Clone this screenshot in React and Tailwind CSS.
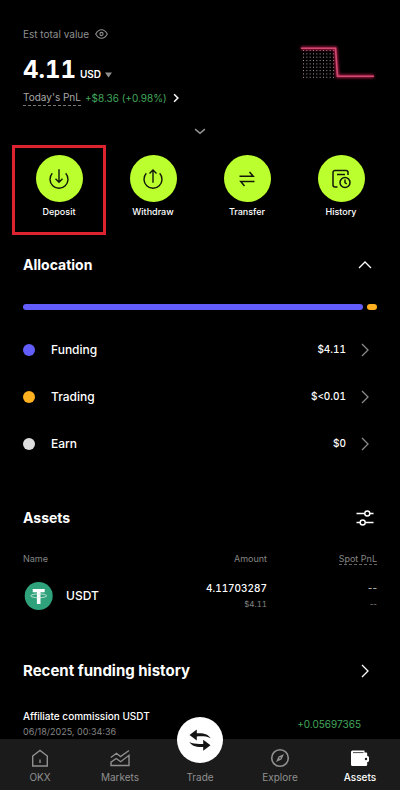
import React from 'react';

function Chevron({ className, d, size = 16, width = 1.3 }) {
  return (
    <svg
      className={className}
      width={size}
      height={size}
      viewBox="0 0 16 16"
      fill="none"
      stroke="currentColor"
      strokeWidth={width}
      aria-hidden="true"
    >
      <path d={d} />
    </svg>
  );
}

const RIGHT = 'M5 2l6 6-6 6';
const UP = 'M2 11l6-6 6 6';

function PnlChart() {
  const dots = [];
  for (let row = 0; row < 9; row += 1) {
    for (let col = 0; col < 10; col += 1) {
      dots.push(
        <rect key={`${row}-${col}`} x={6 + col * 3.33} y={10 + row * 3.35} width="1" height="1" />
      );
    }
  }
  return (
    <svg className="mt-4 shrink-0" width="80" height="44" viewBox="0 0 80 44" fill="none" aria-hidden="true">
      <defs>
        <filter id="glow" x="-20%" y="-30%" width="140%" height="160%">
          <feGaussianBlur stdDeviation="1.5" />
        </filter>
      </defs>
      <g fill="#b09a9c">{dots}</g>
      <path d="M4 8.2h34.500l2 28h36.500" stroke="#c21f50" strokeWidth="3" filter="url(#glow)" />
      <path d="M4 8.2h34.500l2 28h36.500" stroke="#d24a70" strokeWidth="1.6" />
    </svg>
  );
}

function DepositIcon() {
  return (
    <svg width="24" height="24" viewBox="0 0 24 24" fill="none" stroke="#10180a" strokeWidth="1.4" aria-hidden="true">
      <path d="M5.300 6.300a9 9 0 1 0 13.400 0M12 2.200v13M8.500 11.800l3.500 3.400 3.500-3.400" />
    </svg>
  );
}

function WithdrawIcon() {
  return (
    <svg width="24" height="24" viewBox="0 0 24 24" fill="none" stroke="#10180a" strokeWidth="1.4" aria-hidden="true">
      <path d="M5.300 6.300a9 9 0 1 0 13.400 0M12 15.800V3M8.500 6.400L12 3l3.500 3.400" />
    </svg>
  );
}

function TransferIcon() {
  return (
    <svg width="24" height="24" viewBox="0 0 24 24" fill="none" stroke="#10180a" strokeWidth="1.5" aria-hidden="true">
      <path d="M4.500 9.300h13.700L14.500 5M19.500 14.600H5.800l3.700 4.300" />
    </svg>
  );
}

function HistoryIcon() {
  return (
    <svg width="24" height="24" viewBox="0 0 24 24" fill="none" stroke="#10180a" strokeWidth="1.5" aria-hidden="true">
      <path d="M8.500 20H6a2 2 0 0 1-2-2V5.500a2 2 0 0 1 2-2h11a2 2 0 0 1 2 2V8M8 7.500h8" />
      <circle cx="16" cy="15.500" r="5" />
      <path d="M16 12.500v3.200l1.700 1.300" />
    </svg>
  );
}

const actions = [
  { label: 'Deposit', Icon: DepositIcon, marked: true },
  { label: 'Withdraw', Icon: WithdrawIcon },
  { label: 'Transfer', Icon: TransferIcon },
  { label: 'History', Icon: HistoryIcon },
];

const accounts = [
  { name: 'Funding', value: '$4.11', dot: 'bg-[#625dfb]' },
  { name: 'Trading', value: '$<0.01', dot: 'bg-[#ffb11f]' },
  { name: 'Earn', value: '$0', dot: 'bg-[#dedede]' },
];

function NavIcon({ name }) {
  if (name === 'OKX') {
    return (
      <svg width="20" height="20" viewBox="0 0 20 20" fill="none" stroke="currentColor" strokeWidth="1.4" aria-hidden="true">
        <path d="M2.700 8L10 2.500 17.300 8v10H2.700zM10 11.500v3.500" />
      </svg>
    );
  }
  if (name === 'Markets') {
    return (
      <svg width="20" height="20" viewBox="0 0 20 20" fill="none" stroke="currentColor" strokeWidth="1.4" aria-hidden="true">
        <path d="M.8 9.500l5.700-4.200 4 3.200L19 2.500M1 17.500v-3.300l5.200-3.700 4.500 3.200L19 7.300v10.200z" />
      </svg>
    );
  }
  if (name === 'Explore') {
    return (
      <svg width="20" height="20" viewBox="0 0 20 20" fill="none" stroke="currentColor" strokeWidth="1.6" aria-hidden="true">
        <circle cx="10" cy="10" r="8.300" />
        <path d="M14 6l-2.500 5.500L6 14l2.500-5.500z" fill="currentColor" stroke="none" />
        <circle cx="10" cy="10" r=".8" fill="#1b1b1b" stroke="none" />
      </svg>
    );
  }
  return (
    <svg width="20" height="20" viewBox="0 0 20 20" aria-hidden="true">
      <path d="M2.500 2.500h12v2h1.700q1 0 1 1V8h.3q1.500 0 1.500 1.500v3q0 1.500-1.500 1.500h-.3v2.500q0 1.500-1.500 1.500H2.500q-1.500 0-1.500-1.500V4q0-1.500 1.500-1.500z" fill="currentColor" />
      <path d="M3 4.600h10.500" stroke="#1b1b1b" strokeWidth=".8" />
      <circle cx="16" cy="11" r="1.200" fill="#1b1b1b" />
    </svg>
  );
}

function NavItem({ name, active }) {
  return (
    <a
      href={`#${name.toLowerCase()}`}
      className={`flex flex-1 flex-col items-center pt-[9px] ${active ? 'font-medium text-white' : 'text-[#909090]'}`}
    >
      <NavIcon name={name} />
      <span className="mt-0.5 text-[10px] leading-[14px]">{name}</span>
    </a>
  );
}

export default function App() {
  return (
    <div className="flex min-h-screen flex-col bg-black font-['Inter','Liberation_Sans',sans-serif] text-white">
      <main className="flex-1">
        <header className="flex justify-between px-[23px] pt-6">
          <div>
            <div className="flex h-5 items-center gap-1.5 text-[10px] text-[#8f8f8f]">
              <span>Est total value</span>
              <button type="button" aria-label="Hide balance">
                <svg width="13" height="12" viewBox="0 0 13 12" fill="none" stroke="currentColor" strokeWidth="1.1" aria-hidden="true">
                  <path d="M.7 6Q3 1.700 6.500 1.700T12.300 6Q10 10.300 6.500 10.300T.7 6z" />
                  <circle cx="6.500" cy="6" r="1.600" />
                </svg>
              </button>
            </div>
            <div className="mt-3 flex h-7 items-baseline gap-1">
              <h1 className="text-2xl leading-7 font-bold tabular-nums">4.11</h1>
              <button type="button" className="flex items-center gap-1 text-[10px] font-semibold">
                USD
                <svg width="7" height="6" viewBox="0 0 7 6" aria-hidden="true">
                  <path d="M0 .5h7L3.500 5.500z" fill="#8f8f8f" />
                </svg>
              </button>
            </div>
            <a href="#pnl" className="mt-1 flex h-5 items-center gap-1 text-[10px]">
              <span className="border-b border-dashed border-[#777777] text-[#a8a8a8]">Today's PnL</span>
              <span className="text-[#42a85b]">+$8.36 (+0.98%)</span>
              <Chevron d={RIGHT} size={10} width={2.4} />
            </a>
          </div>
          <PnlChart />
        </header>

        <button type="button" aria-label="Show more" className="mt-3 flex h-[22px] w-full items-center justify-center text-[#9a9a9a]">
          <Chevron d="M1.500 5.500L8 11 14.500 5.500" size={12} width={1.8} />
        </button>

        <div className="mt-[3px] grid grid-cols-4 px-3">
          {actions.map(({ label, Icon, marked }) => (
            <button
              key={label}
              type="button"
              className={`flex h-[90px] flex-col items-center border-3 pt-[7px] ${marked ? 'border-[#dd2230]' : 'border-transparent'}`}
            >
              <span className="flex size-[47px] items-center justify-center rounded-full bg-[#bcff2f]">
                <Icon />
              </span>
              <span className="mt-1 text-[9px] leading-3 font-medium">{label}</span>
            </button>
          ))}
        </div>

        <div className="px-[23px]">
          <section>
            <div className="mt-2.5 flex h-10 items-center justify-between">
              <h2 className="text-sm font-bold">Allocation</h2>
              <button type="button" aria-label="Collapse allocation" className="flex w-6 justify-center">
                <Chevron d={UP} />
              </button>
            </div>
            <div className="mt-[19px] flex h-1.5 gap-1">
              <div className="flex-1 rounded-full bg-[#625dfb]" />
              <div className="w-2.5 rounded-full bg-[#ffb11f]" />
            </div>
            <ul className="mt-4">
              {accounts.map((account) => (
                <li key={account.name}>
                  <a href={`#${account.name.toLowerCase()}`} className="flex h-[47px] items-center">
                    <span className={`size-3 rounded-full ${account.dot}`} />
                    <span className="ml-4 flex-1 text-xs font-medium">{account.name}</span>
                    <span className="text-[10px] font-medium tabular-nums">{account.value}</span>
                    <span className="ml-[7px] flex w-6 justify-center text-[#8a8a8a]">
                      <Chevron d={RIGHT} />
                    </span>
                  </a>
                </li>
              ))}
            </ul>
          </section>

          <section>
            <div className="mt-[31px] flex h-10 items-center justify-between">
              <h2 className="text-sm font-bold">Assets</h2>
              <button type="button" aria-label="Filter assets" className="flex w-6 justify-center">
                <svg width="18" height="18" viewBox="0 0 18 18" fill="none" stroke="currentColor" strokeWidth="1.4" aria-hidden="true">
                  <path d="M.5 4.500h8.300M13.800 4.500h3.700M.5 13.500h3.700M9.200 13.500h8.300" />
                  <circle cx="11.300" cy="4.500" r="2.500" />
                  <circle cx="6.700" cy="13.500" r="2.500" />
                </svg>
              </button>
            </div>
            <table className="mt-3 w-full table-fixed text-right">
              <thead>
                <tr className="h-[18px] text-[9px] text-[#858585]">
                  <th className="p-0 text-left font-normal">Name</th>
                  <th className="w-[100px] p-0 font-normal">Amount</th>
                  <th className="w-[110px] p-0 font-normal">
                    <span className="border-b border-dashed border-[#666666]">Spot PnL</span>
                  </th>
                </tr>
              </thead>
              <tbody>
                <tr>
                  <td className="p-0 pt-3">
                    <div className="flex items-center">
                      <svg width="30" height="30" viewBox="0 0 30 30" aria-hidden="true">
                        <circle cx="15.700" cy="15" r="14" fill="#2fa27c" />
                        <path d="M9.700 8h12v3.300h-4.200V23h-3.600V11.300H9.700z" fill="#fff" />
                        <ellipse cx="15.700" cy="14.800" rx="8" ry="1.900" fill="none" stroke="#d5efe5" strokeWidth=".8" />
                      </svg>
                      <span className="ml-[13px] text-xs font-medium">USDT</span>
                    </div>
                  </td>
                  <td className="p-0 pt-3 tabular-nums">
                    <div className="text-[10px] leading-4 font-medium">4.11703287</div>
                    <div className="text-[8px] leading-4 text-[#858585]">$4.11</div>
                  </td>
                  <td className="p-0 pt-3">
                    <div className="text-[10px] leading-4 text-[#c8c8c8]">--</div>
                    <div className="text-[8px] leading-4 text-[#858585]">--</div>
                  </td>
                </tr>
              </tbody>
            </table>
          </section>

          <section>
            <div className="mt-[39px] flex h-10 items-center justify-between">
              <h2 className="text-[15px] font-bold">Recent funding history</h2>
              <button type="button" aria-label="Open funding history" className="flex w-6 justify-center">
                <Chevron d={RIGHT} />
              </button>
            </div>
            <div className="mt-[17px] flex items-center justify-between">
              <div>
                <div className="text-[10px] leading-4 font-medium">Affiliate commission USDT</div>
                <div className="text-[9px] leading-[15px] text-[#858585]">06/18/2025, 00:34:36</div>
              </div>
              <span className="mr-4 text-[10px] leading-4 text-[#42a85b]">+0.05697365</span>
            </div>
          </section>
        </div>
      </main>

      <nav className="sticky bottom-0 flex h-[51px] bg-[#1b1b1b]">
        <NavItem name="OKX" />
        <NavItem name="Markets" />
        <a href="#trade" className="relative flex flex-1 flex-col items-center pt-[31px] text-[#909090]">
          <span className="absolute -top-[22px] flex size-[46px] items-center justify-center rounded-full bg-white text-[#151515]">
            <svg width="24" height="24" viewBox="0 0 24 24" fill="currentColor" aria-hidden="true">
              <path d="M1.500 7L8.800 1.500v3.700c6 0 10.800.2 13.900 5-3.900-2-8-1.900-13.900-1.800v4.100z" />
              <path d="M22.500 17.300l-7.300 5.500v-3.700c-6 0-10.800-.2-13.900-5 3.900 2 8 1.900 13.900 1.800v-4.100z" />
            </svg>
          </span>
          <span className="text-[10px] leading-[14px]">Trade</span>
        </a>
        <NavItem name="Explore" />
        <NavItem name="Assets" active />
      </nav>
    </div>
  );
}
